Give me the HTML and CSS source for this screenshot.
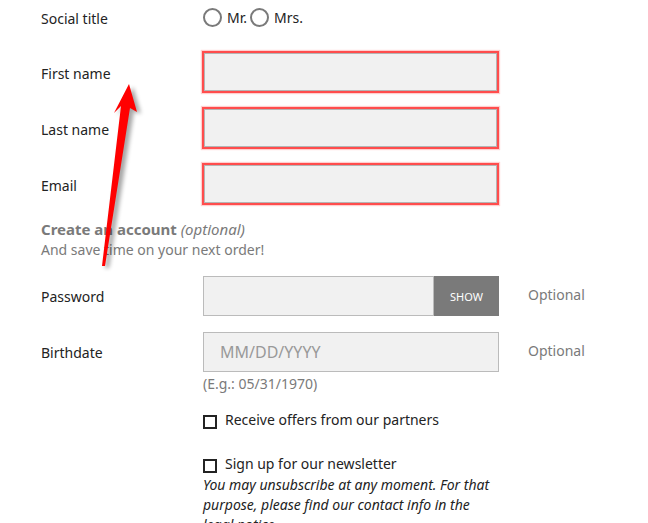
FILE: index.html
```html
<!DOCTYPE html>
<html>
<head>
<meta charset="utf-8">
<link rel="stylesheet" href="styles.css">
</head>
<body>
<form class="form">
  <div class="row row-social">
    <label class="label">Social title</label>
    <div class="radios">
      <span class="radio-item"><span class="radio"></span>Mr.</span>
      <span class="radio-item"><span class="radio"></span>Mrs.</span>
    </div>
  </div>
  <div class="row">
    <label class="label">First name</label>
    <div class="input error"></div>
  </div>
  <div class="row">
    <label class="label">Last name</label>
    <div class="input error"></div>
  </div>
  <div class="row">
    <label class="label">Email</label>
    <div class="input error"></div>
  </div>
  <div class="account">
    <div class="account-title"><b>Create an account</b> <i>(optional)</i></div>
    <div class="account-sub">And save time on your next order!</div>
  </div>
  <div class="row row-pw">
    <label class="label label-sm">Password</label>
    <div class="pw-group">
      <div class="input pw"></div>
      <div class="show">SHOW</div>
    </div>
    <span class="optional">Optional</span>
  </div>
  <div class="row row-bd">
    <label class="label label-sm">Birthdate</label>
    <div class="input bd">MM/DD/YYYY</div>
    <span class="optional">Optional</span>
  </div>
  <div class="row-hint">
    <span></span>
    <div class="hint">(E.g.: 05/31/1970)</div>
  </div>
  <div class="row-check">
    <span></span>
    <div class="check-line"><span class="box"></span>Receive offers from our partners</div>
  </div>
  <div class="row-check row-news">
    <span></span>
    <div>
      <div class="check-line"><span class="box"></span>Sign up for our newsletter</div>
      <div class="news-note">You may unsubscribe at any moment. For that purpose, please find our contact info in the legal notice.</div>
    </div>
  </div>
</form>
<svg class="arrow" width="648" height="523" viewBox="0 0 648 523">
  <defs>
    <filter id="sh" x="-50%" y="-50%" width="200%" height="200%">
      <feGaussianBlur stdDeviation="2.2"/>
    </filter>
  </defs>
  <polygon points="130,85 138,112 131,109 106,266 102,266 121,107 114,113" fill="#000" opacity="0.35" filter="url(#sh)" transform="translate(3,2)"/>
  <polygon points="129,84 137,112 130,108 105,266 102,266 121,106 114,113" fill="#ff0000"/>
</svg>
</body>
</html>
```
FILE: styles.css
```css
html, body {
  margin: 0;
  padding: 0;
  background: #fff;
}
body {
  font-family: "Noto Sans", "Open Sans", sans-serif;
  font-size: 14px;
  color: #232323;
  width: 648px;
  height: 523px;
  overflow: hidden;
  position: relative;
}
.form {
  padding-left: 41px;
}
.row {
  display: grid;
  grid-template-columns: 161px 297px 1fr;
  align-items: center;
  height: 42px;
  margin-bottom: 14px;
}
.row-social {
  height: 34px;
  margin-bottom: 17px;
}
.label {
  line-height: 20px;
  padding-top: 3px;
}
.label-sm {
  padding-top: 2px;
}
.radios {
  display: flex;
  align-items: center;
  gap: 3px;
  margin-left: 1px;
}
.radio-item {
  display: flex;
  align-items: center;
  gap: 5px;
}
.radio {
  width: 15px;
  height: 15px;
  border: 2px solid #7a7a7a;
  border-radius: 50%;
  display: inline-block;
}
.input {
  height: 42px;
  box-sizing: border-box;
  background: #f1f1f1;
  border: 1px solid #bbb;
}
.input.error {
  border: 2px solid #ff4d4d;
  box-shadow: 0 0 1px 1px rgba(255, 120, 120, 0.35), inset 0 0 0 1px #b5b5b5;
}
.account {
  margin-top: 12px;
  color: #7a7a7a;
  line-height: 20px;
}
.account-title {
  font-size: 15px;
}
.account-title b {
  font-weight: 700;
}
.account-sub {
  margin-top: 1px;
}
.row-pw {
  height: 40px;
  margin-top: 16px;
  margin-bottom: 16px;
}
.pw-group {
  display: flex;
  height: 40px;
  margin-left: 1px;
}
.input.pw {
  flex: 1;
  height: 40px;
}
.show {
  width: 65px;
  background: #7a7a7a;
  color: #fff;
  font-size: 11px;
  display: flex;
  align-items: center;
  justify-content: center;
}
.optional {
  color: #7a7a7a;
  margin-left: 29px;
  margin-top: -4px;
}
.row-bd {
  height: 40px;
  margin-bottom: 0;
}
.input.bd {
  height: 40px;
  margin-left: 1px;
  width: 296px;
  color: #999;
  font-size: 16px;
  display: flex;
  align-items: center;
  padding-left: 16px;
}
.row-hint, .row-check {
  display: grid;
  grid-template-columns: 162px 1fr;
}
.hint {
  color: #7a7a7a;
  line-height: 20px;
  margin-top: 2px;
}
.row-check {
  margin-top: 16px;
}
.row-news {
  margin-top: 24px;
}
.check-line {
  display: flex;
  align-items: center;
  line-height: 20px;
}
.box {
  width: 10px;
  height: 10px;
  border: 2px solid #232323;
  margin-right: 8px;
  margin-top: 3px;
}
.news-note {
  font-style: italic;
  line-height: 20px;
  width: 300px;
  margin-top: 1px;
}
.arrow {
  position: absolute;
  left: 0;
  top: 0;
  pointer-events: none;
}
```
